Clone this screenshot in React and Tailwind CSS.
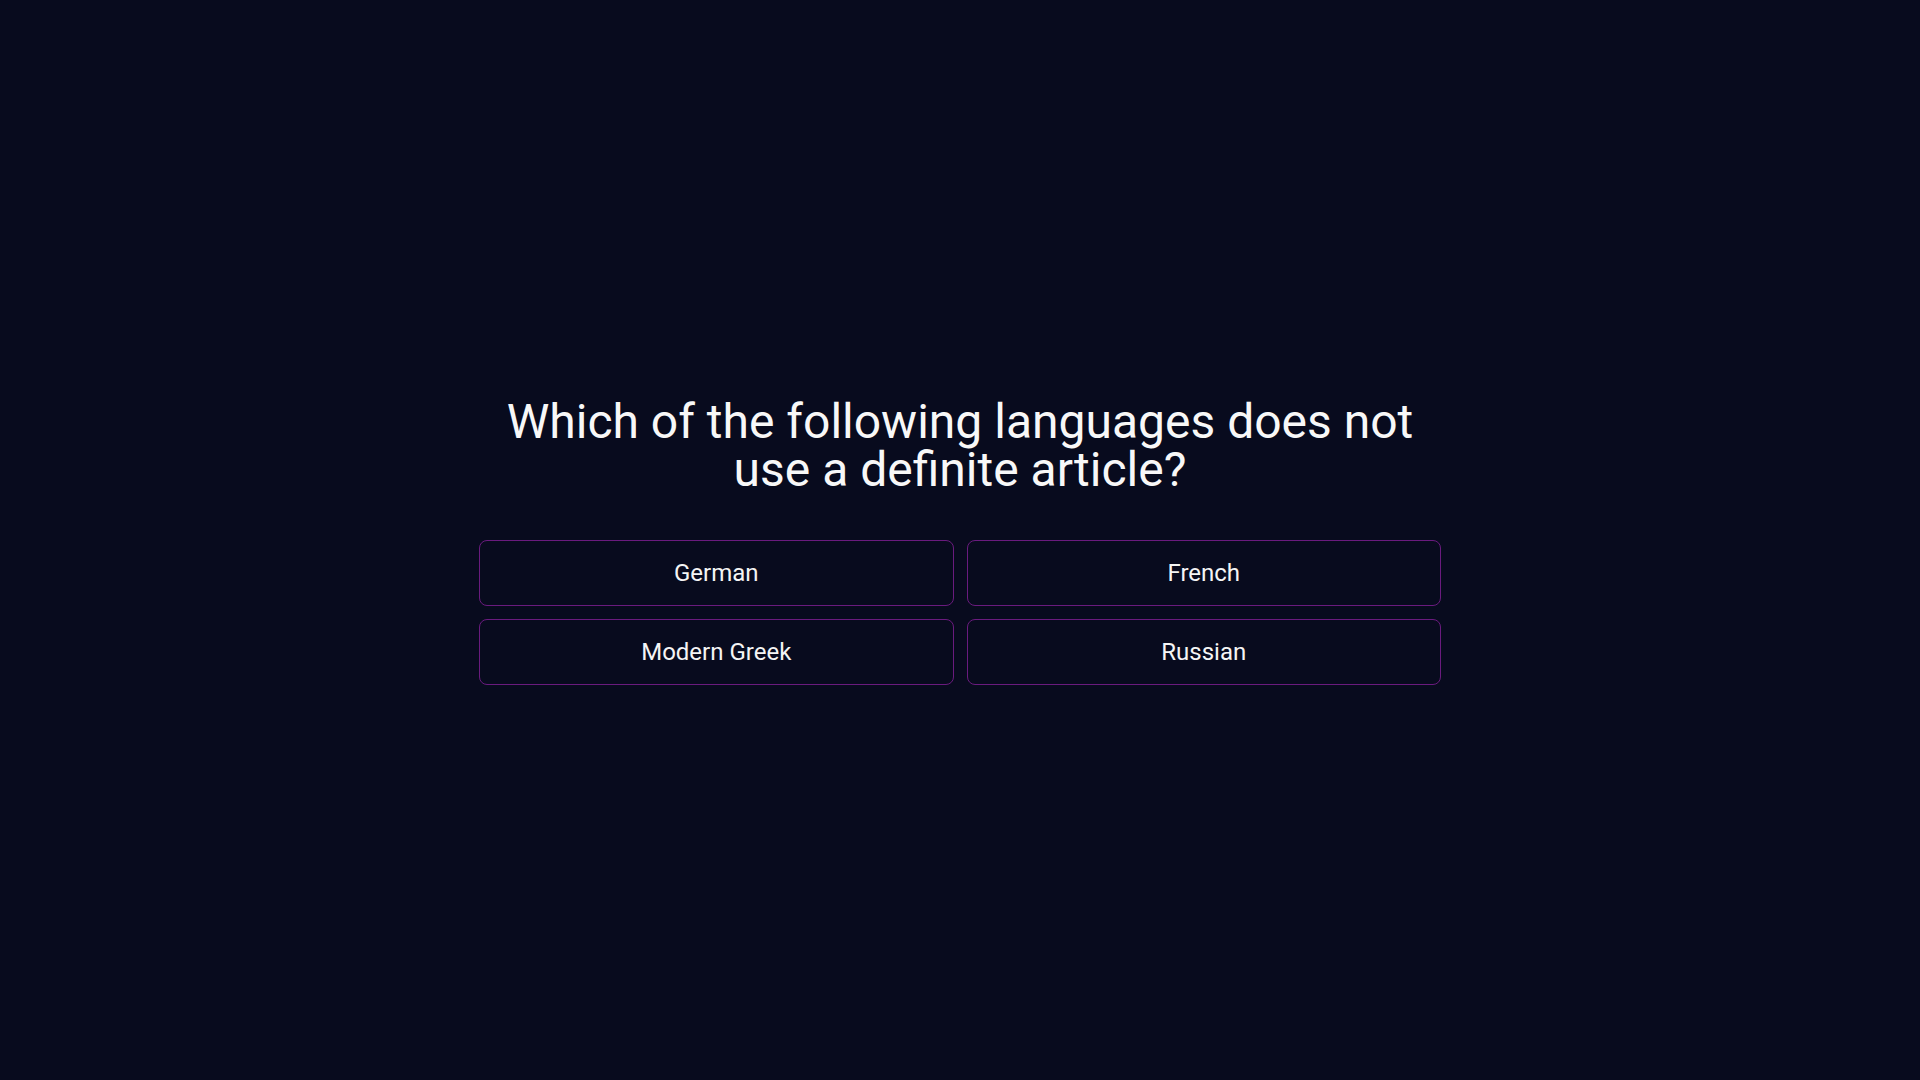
export default function App() {
  const answers = ["German", "French", "Modern Greek", "Russian"];

  return (
    <div className="min-h-screen w-full bg-[#080b1e] flex items-center justify-center font-['Roboto',sans-serif]">
      <div className="w-[962px] pt-[2px] flex flex-col items-center">
        {/* Question */}
        <h1 className="text-5xl leading-none text-[#f8f8f8] text-center max-w-[920px] mb-[46px]">
          Which of the following languages does not use a definite article?
        </h1>

        {/* Answers */}
        <div className="grid grid-cols-2 gap-x-[13px] gap-y-[13px] w-full">
          {answers.map((answer) => (
            <button
              key={answer}
              className="h-[66px] rounded-lg border border-[#6a1b7e] bg-transparent text-2xl text-[#f5f5f5]"
            >
              {answer}
            </button>
          ))}
        </div>
      </div>
    </div>
  );
}
